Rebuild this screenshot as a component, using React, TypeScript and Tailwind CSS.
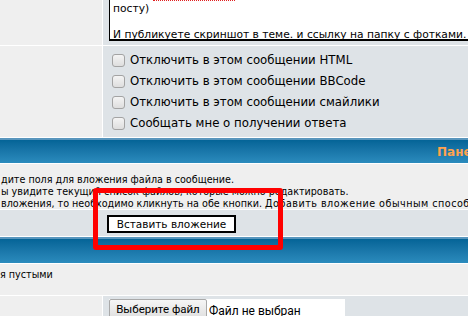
import React from "react";

const Checkbox = ({ label }: { label: string }) => (
	<div className="flex items-center h-[21px]">
		<span className="w-[13px] h-[13px] rounded-[3px] border border-[#a3a3a3] bg-gradient-to-b from-[#f4f4f4] to-[#dedede] ml-[9px] mr-[5px]" />
		<span className="text-[11.75px] text-black whitespace-nowrap">{label}</span>
	</div>
);

export default function App() {
	return (
		<div className="relative w-[468px] h-[316px] overflow-hidden bg-white font-['DejaVu_Sans',Verdana,sans-serif] flex flex-col gap-px">
			{/* message body row */}
			<div className="flex gap-px h-[45px] shrink-0">
				<div className="w-[102px] bg-[#efefef]" />
				<div className="flex-1 bg-[#dee3e7] pl-[6px] overflow-hidden">
					<div className="w-[420px] h-[41px] bg-white border-l border-b-2 border-black pl-[3px] text-[10.7px] leading-[13px] text-black whitespace-nowrap">
						<div className="h-[2px] ml-[40px] w-[82px] border-t border-dotted border-[#e02020]" />
						<div>посту)</div>
						<div className="h-[13px]" />
						<div>И публикуете скриншот в теме. и ссылку на папку с фотками.</div>
					</div>
				</div>
			</div>

			{/* options row */}
			<div className="flex gap-px h-[91px] shrink-0">
				<div className="w-[102px] bg-[#efefef]" />
				<div className="flex-1 bg-[#dee3e7] pt-[4px] flex flex-col">
					<Checkbox label="Отключить в этом сообщении HTML" />
					<Checkbox label="Отключить в этом сообщении BBCode" />
					<Checkbox label="Отключить в этом сообщении смайлики" />
					<Checkbox label="Сообщать мне о получении ответа" />
				</div>
			</div>

			{/* attachment panel header */}
			<div className="h-[25px] shrink-0 border-t-2 border-[#5996bd] bg-gradient-to-b from-[#046497] to-[#2b8bbd] flex items-center pl-[437px] whitespace-nowrap overflow-hidden">
				<span className="text-[12px] font-bold text-[#ffa34f]">Пане</span>
			</div>

			<div className="h-[45px] shrink-0 bg-[#efefef] pt-[10px] pl-[1px] text-[9.6px] leading-[12px] text-black whitespace-nowrap overflow-hidden">
				<div>дите поля для вложения файла в сообщение.</div>
				<div>ы увидите текущий список файлов, которые можно редактировать.</div>
				<div>
					вложения, то необходимо кликнуть на обе кнопки.{" "}
					<span className="tracking-[0.5px]">Добавить вложение обычным способом</span>
				</div>
			</div>

			<div className="h-[26px] shrink-0 bg-[#dee3e7] pl-[107px] pt-[1px]">
				<button className="h-[18px] w-[129px] border-2 border-black bg-white text-[10.5px] leading-none text-black whitespace-nowrap font-['DejaVu_Sans',sans-serif]">
					Вставить вложение
				</button>
			</div>

			{/* add attachment header */}
			<div className="h-[26px] shrink-0 border-t-2 border-[#5996bd] bg-gradient-to-b from-[#046497] to-[#2b8bbd]" />

			<div className="h-[31px] shrink-0 bg-[#efefef] pt-[5px] text-[9.6px] leading-[12px] text-black whitespace-nowrap">
				я пустыми
			</div>

			<div className="flex gap-px flex-1">
				<div className="w-[102px] bg-[#efefef]" />
				<div className="flex-1 bg-[#dee3e7] pl-[6px] pt-[3px]">
					<div className="flex h-[22px] w-[236px] bg-white font-['Roboto',Arial,sans-serif] text-black whitespace-nowrap">
						<span className="w-[98px] h-[22px] shrink-0 flex items-center justify-center rounded-[2px] border border-[#a9a9a9] bg-gradient-to-b from-[#f6f6f6] to-[#dddddd] text-[11.5px]">
							Выберите файл
						</span>
						<span className="pl-[2px] pt-[3px] text-[12px]">Файл не выбран</span>
					</div>
				</div>
			</div>

			{/* red highlight drawn over the screenshot */}
			<div className="absolute left-[93px] top-[188px] w-[190px] h-[62px] border-[5px] border-[#ff0000] rounded-[3px]" />
		</div>
	);
}
